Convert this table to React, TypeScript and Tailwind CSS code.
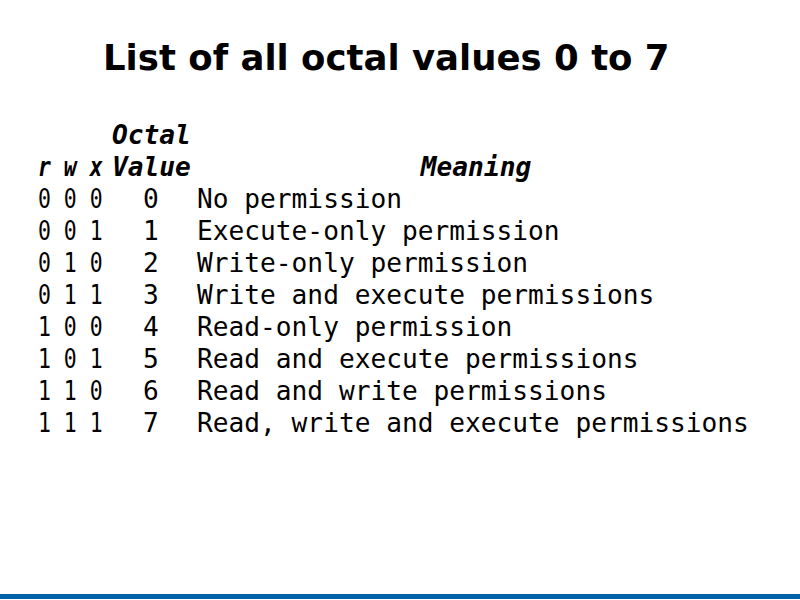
const rows: [string, string, string][] = [
  ['0 0 0', '0', 'No permission'],
  ['0 0 1', '1', 'Execute-only permission'],
  ['0 1 0', '2', 'Write-only permission'],
  ['0 1 1', '3', 'Write and execute permissions'],
  ['1 0 0', '4', 'Read-only permission'],
  ['1 0 1', '5', 'Read and execute permissions'],
  ['1 1 0', '6', 'Read and write permissions'],
  ['1 1 1', '7', 'Read, write and execute permissions'],
];

export default function App() {
  return (
    <div className="w-[800px] h-[600px] bg-white flex flex-col text-black">
      <h1 className="pl-[103px] pt-[36px] h-[119px] font-['DejaVu_Sans',sans-serif] font-bold text-[35.5px] leading-[44px]">
        List of all octal values 0 to 7
      </h1>

      <div className="pl-[38px] font-['DejaVu_Sans_Mono',monospace] text-[26.2px] leading-[32px] whitespace-pre">
        {/* header */}
        <div className="flex items-end font-bold italic">
          <div className="w-[74px]">
            <span className="inline-block origin-left scale-x-[0.82]">r w x</span>
          </div>
          <div className="w-[78px] text-center">
            Octal
            <br />
            Value
          </div>
          <div className="w-[558px] ml-[7px] text-center">Meaning</div>
        </div>

        {rows.map(([bits, val, meaning]) => (
          <div key={bits} className="flex">
            <div className="w-[74px]">
              <span className="inline-block origin-left scale-x-[0.82]">{bits}</span>
            </div>
            <div className="w-[78px] text-center">{val}</div>
            <div className="ml-[7px]">{meaning}</div>
          </div>
        ))}
      </div>

      <div className="mt-auto mb-px h-[5px] bg-[#0062a8]" />
    </div>
  );
}
